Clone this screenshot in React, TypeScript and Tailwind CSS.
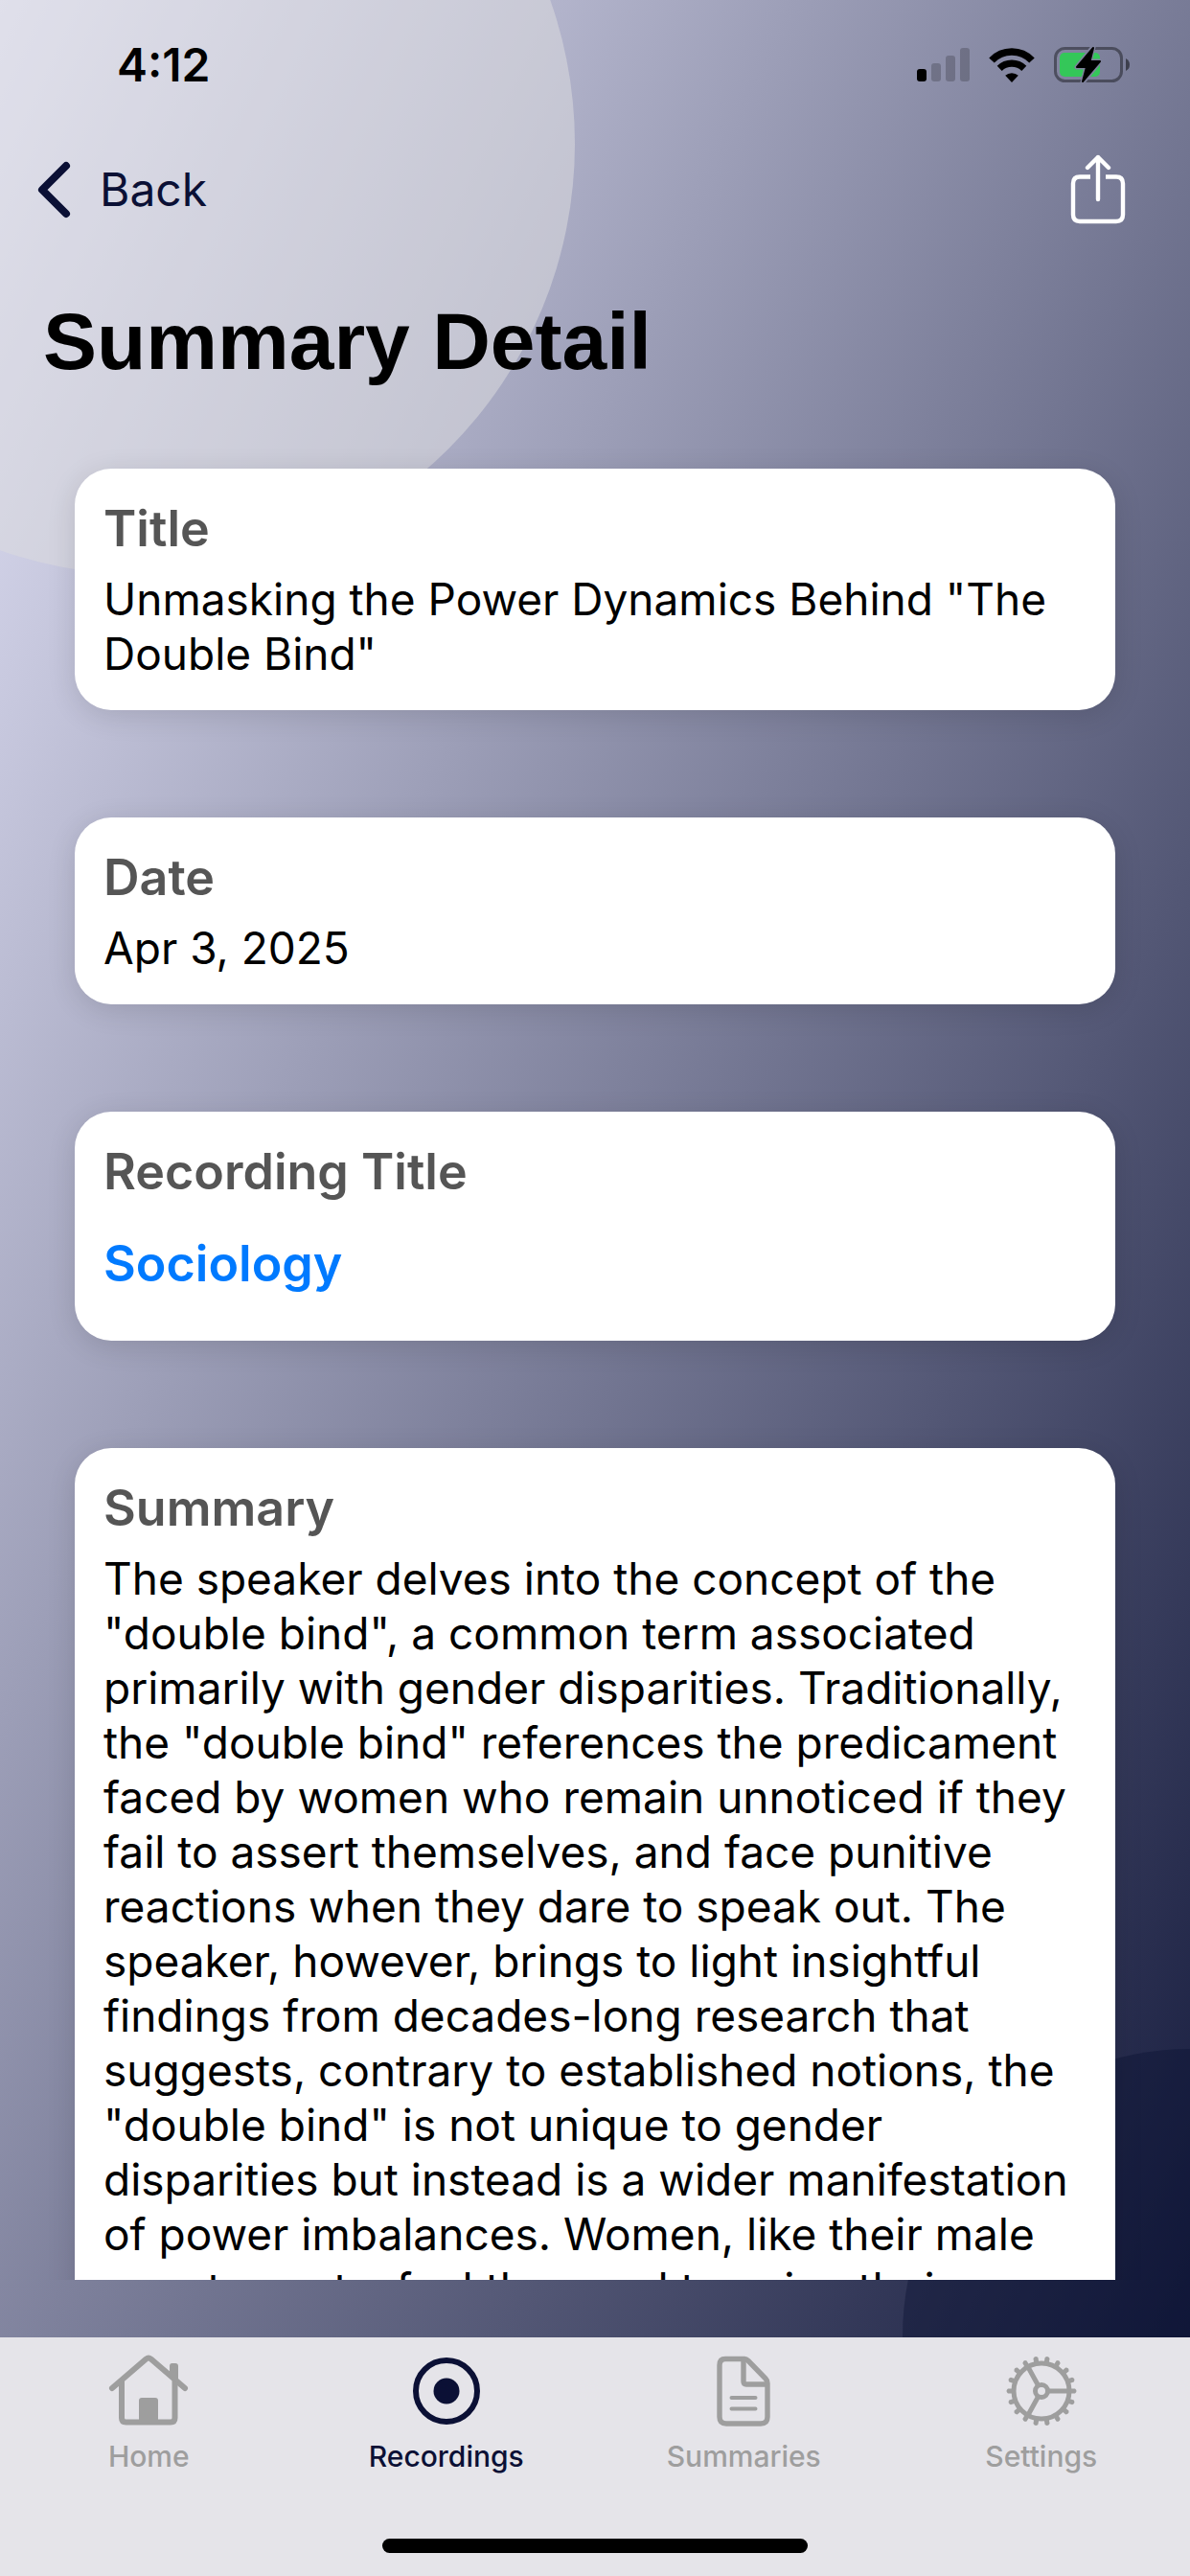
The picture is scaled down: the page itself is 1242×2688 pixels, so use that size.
import type { ReactNode } from 'react';

type TabName = 'Home' | 'Recordings' | 'Summaries' | 'Settings';

const summaryText =
  'The speaker delves into the concept of the "double bind", a common term associated primarily with gender disparities. Traditionally, the "double bind" references the predicament faced by women who remain unnoticed if they fail to assert themselves, and face punitive reactions when they dare to speak out. The speaker, however, brings to light insightful findings from decades-long research that suggests, contrary to established notions, the "double bind" is not unique to gender disparities but instead is a wider manifestation of power imbalances. Women, like their male counterparts, feel the need to voice their';

function SignalIcon() {
  return (
    <svg width="55" height="36" viewBox="0 0 55 36" aria-hidden="true">
      <rect x="0" y="22" width="10" height="13" rx="3" />
      <g fillOpacity="0.2">
        <rect x="15" y="16" width="10" height="19" rx="3" />
        <rect x="30" y="8" width="10" height="27" rx="3" />
        <rect x="45" y="0" width="10" height="35" rx="3" />
      </g>
    </svg>
  );
}

function WifiIcon() {
  return (
    <svg width="48" height="36" viewBox="0 0 48 36" aria-hidden="true">
      <path d="M24 36 L17.2 28.8 A10 10 0 0 1 30.8 28.8 Z" />
      <path d="M3 13 A29 29 0 0 1 45 13" fill="none" stroke="#000" strokeWidth="7.6" />
      <path d="M11.2 21.4 A18.4 18.4 0 0 1 36.8 21.4" fill="none" stroke="#000" strokeWidth="7.2" />
    </svg>
  );
}

function BatteryIcon() {
  return (
    <svg width="80" height="40" viewBox="0 0 80 40" aria-hidden="true">
      <mask id="bolt-gap">
        <rect width="80" height="40" fill="#fff" />
        <path d="M41 1 L24 22 H34 L30 38 L48 16 H37 Z" fill="#000" stroke="#000" strokeWidth="5" strokeLinejoin="round" />
      </mask>
      <g mask="url(#bolt-gap)">
        <rect x="1.5" y="2.5" width="69" height="34" rx="10" fill="none" stroke="#000" strokeOpacity="0.4" strokeWidth="3" />
        <rect x="6" y="7" width="42" height="25" rx="5" fill="#34c759" />
      </g>
      <path d="M75 13 Q79 15 79 19.5 Q79 24 75 26 Z" fillOpacity="0.5" />
      <path d="M41 2 L24 22 H34 L30 37 L48 16 H37.5 Z" stroke="#000" strokeWidth="2" strokeLinejoin="round" />
    </svg>
  );
}

function ShareIcon() {
  return (
    <svg
      width="60"
      height="74"
      viewBox="0 0 60 74"
      fill="none"
      stroke="#fff"
      strokeWidth="4.4"
      strokeLinecap="round"
      strokeLinejoin="round"
      aria-hidden="true"
    >
      <path d="M22 23.5 H11 Q4 23.5 4 30.5 V63 Q4 70 11 70 H49 Q56 70 56 63 V30.5 Q56 23.5 49 23.5 H38" strokeLinecap="butt" />
      <path d="M30 47 V3 M19 14 L30 3 L41 14" />
    </svg>
  );
}

function HomeIcon() {
  return (
    <svg width="84" height="76" viewBox="0 0 84 76" fill="none" stroke="currentColor" strokeWidth="6" strokeLinecap="round" strokeLinejoin="round" aria-hidden="true">
      <path d="M4 35 L39.5 4.5 Q42 2.5 44.5 4.5 L80 35" />
      <path d="M14 28 V66 Q14 70.5 18.5 70.5 H65 Q69.5 70.5 69.5 66 V28" />
      <path d="M64 22 V12 Q64 9 66.5 9 H70 Q73 9 73 12 V30 Z" fill="currentColor" stroke="none" />
      <path d="M32 71 V48 Q32 45 35 45 H49 Q52 45 52 48 V71 Z" fill="currentColor" stroke="none" />
    </svg>
  );
}

function RecordIcon() {
  return (
    <svg width="76" height="76" viewBox="0 0 76 76" aria-hidden="true">
      <circle cx="38" cy="38" r="32" fill="none" stroke="currentColor" strokeWidth="6" />
      <circle cx="38" cy="38" r="13.5" fill="currentColor" />
    </svg>
  );
}

function DocumentIcon() {
  return (
    <svg width="60" height="76" viewBox="0 0 60 76" fill="none" stroke="currentColor" strokeWidth="5.4" strokeLinecap="round" strokeLinejoin="round" aria-hidden="true">
      <path d="M11 4.5 H31 Q33 4.5 35 6.5 L53 25 Q55 27 55 30 V65 Q55 72 48 72 H12 Q5 72 5 65 V11 Q5 4.5 11 4.5 Z" />
      <path d="M30 5 V28 Q30 31 33 31 H54" />
      <path d="M17.5 45 H42.5 M17.5 56.5 H42.5" strokeWidth="4" />
    </svg>
  );
}

function GearIcon() {
  const teeth = Array.from({ length: 18 }, (_, i) => i * 20);

  return (
    <svg width="76" height="76" viewBox="0 0 76 76" aria-hidden="true">
      <g fill="none" stroke="currentColor" strokeWidth="5">
        <circle cx="38" cy="38" r="29" />
        <circle cx="38" cy="38" r="6.5" />
        <path d="M44 38 H66 M35 33 L24 13 M35 43 L24 63" />
      </g>
      {teeth.map((angle) => (
        <path
          key={angle}
          d="M66 33 L69 35.5 L73 35.5 Q76 38 73 40.5 L69 40.5 L66 43 Z"
          fill="currentColor"
          transform={`rotate(${angle} 38 38)`}
        />
      ))}
    </svg>
  );
}

interface DetailCardProps {
  label: string;
  children: ReactNode;
}

function DetailCard({ label, children }: DetailCardProps) {
  return (
    <section className="rounded-[38px] bg-white p-[30px] shadow-[0_6px_30px_rgba(0,0,0,0.12)]">
      <h2 className="mb-3 text-[52px] leading-[66px] font-semibold text-[#555555]">{label}</h2>
      {children}
    </section>
  );
}

interface TabItemProps {
  name: TabName;
  icon: ReactNode;
  active?: boolean;
}

function TabItem({ name, icon, active }: TabItemProps) {
  return (
    <button
      type="button"
      aria-current={active ? 'page' : undefined}
      className={`flex flex-1 flex-col items-center gap-3 text-[30px] leading-9 font-medium ${active ? 'text-[#0b1035]' : 'text-[#9e9e9e]'}`}
    >
      {icon}
      {name}
    </button>
  );
}

export default function App() {
  return (
    <div className="relative isolate flex h-screen flex-col overflow-hidden bg-linear-to-br/srgb from-[#e6e6fa] to-[#0a1033] font-['Inter','Liberation_Sans',sans-serif] text-black">
      {/* Decorative circles behind the content */}
      <div className="absolute -top-[300px] -left-[300px] -z-10 size-[900px] rounded-full bg-[#dadade]/55" />
      <div className="absolute -right-[300px] -bottom-[50px] -z-10 size-[600px] rounded-full bg-[#0a1233]/40" />

      <div className="flex h-[136px] items-center justify-between pr-[62px] pl-[122px]">
        <time className="text-[48px] leading-[60px] font-semibold">4:12</time>
        <div className="flex items-center gap-5">
          <SignalIcon />
          <WifiIcon />
          <BatteryIcon />
        </div>
      </div>

      <header>
        <div className="flex h-[124px] items-center justify-between pr-[66px] pl-9">
          <button type="button" className="flex items-center gap-7 text-[48px] leading-[60px] text-[#0b1035]">
            <svg width="40" height="60" viewBox="0 0 40 60" fill="none" stroke="currentColor" strokeWidth="8" strokeLinecap="round" strokeLinejoin="round" aria-hidden="true">
              <path d="M33 5 L8 30 L33 55" />
            </svg>
            Back
          </button>
          <button type="button" aria-label="Share">
            <ShareIcon />
          </button>
        </div>
        <h1 className="px-[45px] py-[46px] font-['Liberation_Sans',Arial,sans-serif] text-[84px] leading-[100px] font-bold">
          Summary Detail
        </h1>
      </header>

      <main className="flex flex-1 flex-col gap-28 overflow-y-auto px-[78px] pt-[37px] [scrollbar-width:none]">
        <DetailCard label="Title">
          <p className="text-[46px] leading-[57px]">Unmasking the Power Dynamics Behind "The Double Bind"</p>
        </DetailCard>
        <DetailCard label="Date">
          <p className="text-[46px] leading-[57px]">Apr 3, 2025</p>
        </DetailCard>
        <DetailCard label="Recording Title">
          <a href="#sociology" className="block py-[18px] text-[52px] leading-[65px] font-semibold text-[#007aff]">
            Sociology
          </a>
        </DetailCard>
        <DetailCard label="Summary">
          <p className="text-[46px] leading-[57px]">{summaryText}</p>
        </DetailCard>
      </main>

      <footer className="mt-[60px] flex h-[249px] flex-col justify-between bg-[#e5e4e9] pt-[18px] pb-6">
        <nav className="flex">
          <TabItem name="Home" icon={<HomeIcon />} />
          <TabItem name="Recordings" icon={<RecordIcon />} active />
          <TabItem name="Summaries" icon={<DocumentIcon />} />
          <TabItem name="Settings" icon={<GearIcon />} />
        </nav>
        <div className="h-[15px] w-[444px] self-center rounded-full bg-black" />
      </footer>
    </div>
  );
}
